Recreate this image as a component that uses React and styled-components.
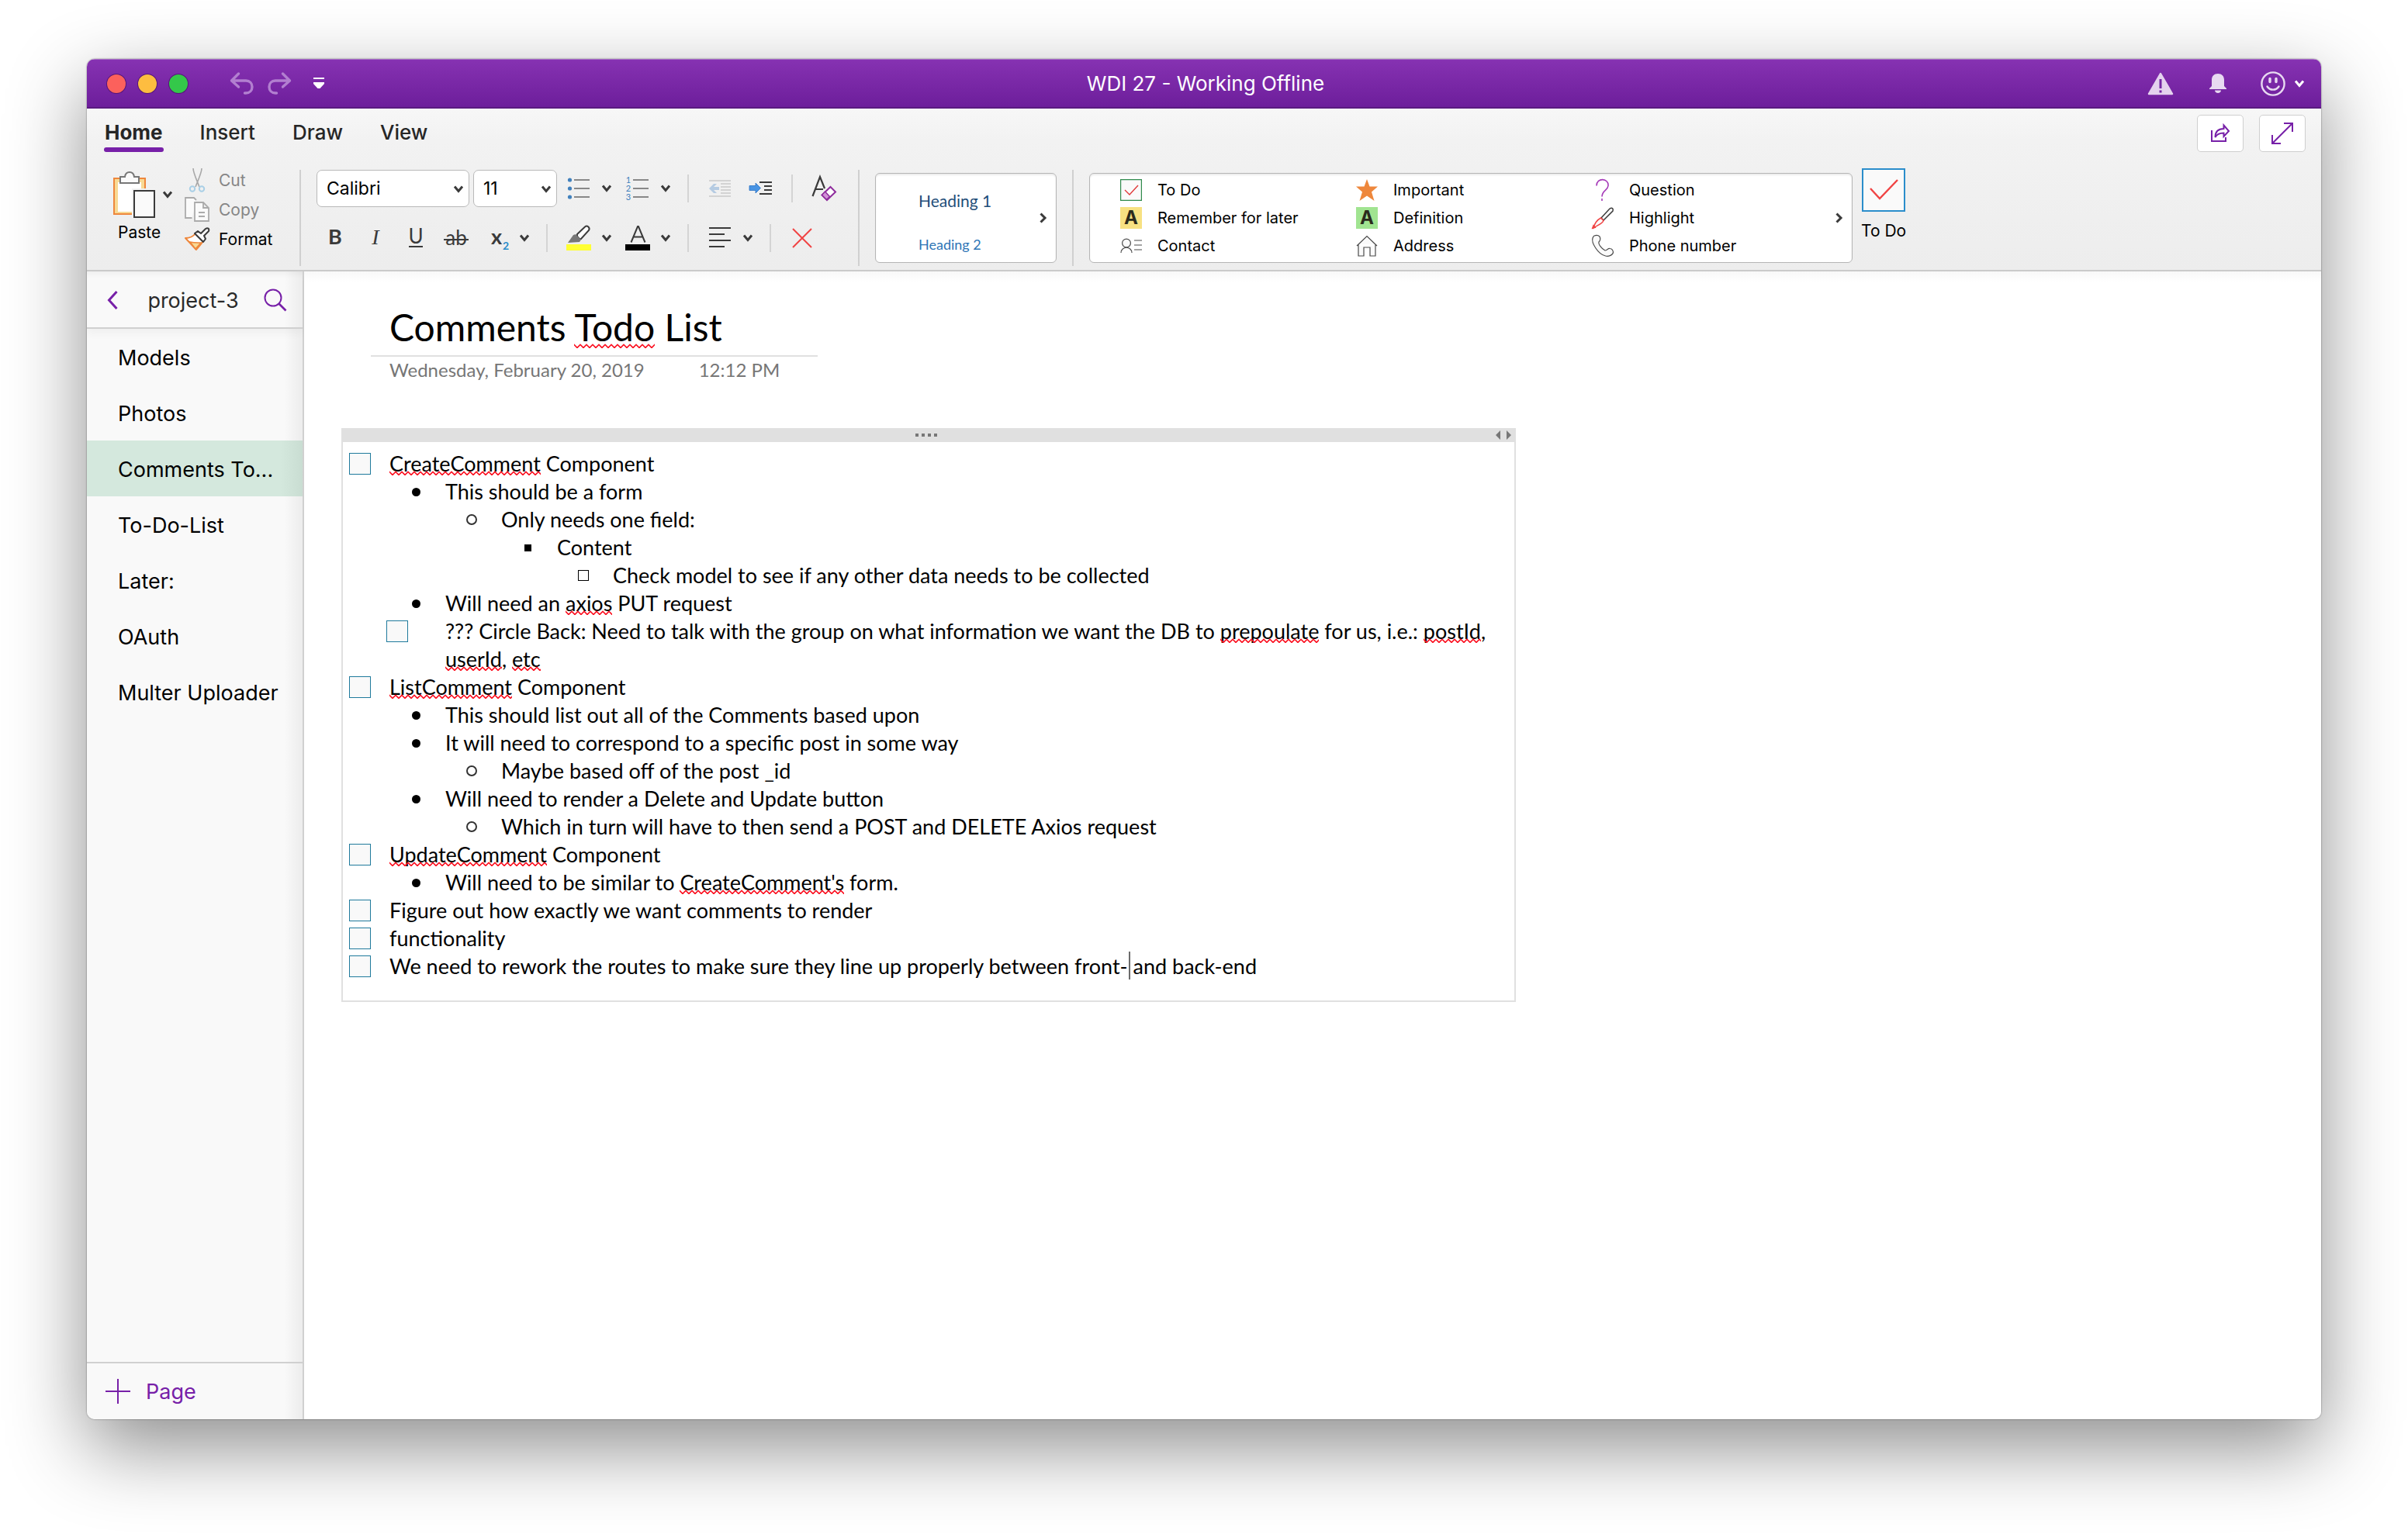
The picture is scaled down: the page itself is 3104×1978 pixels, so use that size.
import React from "react";
import styled, { createGlobalStyle, css } from "styled-components";

const ui = `Inter, "Liberation Sans", sans-serif`;
const note = `Lato, "Open Sans", sans-serif`;
const purple = "#7720a8";
const ink = "#3a3a3a";

const GlobalStyle = createGlobalStyle`
  *, *::before, *::after { box-sizing: border-box; }
  body { margin: 0; background: #fff; font-family: ${ui}; color: #000; }
  button, select, input { font: inherit; color: inherit; margin: 0; }
  button { padding: 0; border: 0; background: none; cursor: pointer; }
  svg { display: block; flex: none; overflow: visible; }
  ul { list-style: none; margin: 0; padding: 0; }
`;

/* ---------- window ---------- */

const Desktop = styled.div`
  display: flex;
  min-height: 100vh;
  padding: 76px 112px 148px;
`;

const Window = styled.div`
  flex: 1;
  min-width: 0;
  display: flex;
  flex-direction: column;
  border-radius: 10px;
  overflow: hidden;
  background: #fff;
  box-shadow: 0 0 2px rgba(0, 0, 0, 0.55), 0 36px 100px rgba(0, 0, 0, 0.45);
`;

const TitleBar = styled.header`
  display: grid;
  grid-template-columns: 1fr auto 1fr;
  align-items: center;
  height: 64px;
  padding: 0 22px 0 26px;
  background: linear-gradient(#8632b2, #6d1e9b);
  border-top: 1px solid #a873c6;
  border-bottom: 2px solid #5a1a80;
  color: #fff;
`;

const TitleSide = styled.div`
  display: flex;
  align-items: center;
  justify-content: ${(p) => (p.$end ? "flex-end" : "flex-start")};
`;

const Lights = styled.div`
  display: flex;
  gap: 16px;
  margin-right: 54px;
`;

const Light = styled.button`
  width: 24px;
  height: 24px;
  border-radius: 50%;
  background: ${(p) => p.$color};
  box-shadow: 0 0 0 1px rgba(60, 10, 90, 0.6);
`;

const BarButton = styled.button`
  display: flex;
  align-items: center;
  gap: 12px;
  margin-left: ${(p) => p.$gap || 0}px;
`;

const WindowTitle = styled.h1`
  margin: 0;
  font-size: 26px;
  line-height: 32px;
  font-weight: 400;
`;

/* ---------- ribbon ---------- */

const Ribbon = styled.section`
  background: linear-gradient(#f7f7f7, #f2f2f2 20%, #ededed);
  border-bottom: 2px solid #cacaca;
`;

const TabRow = styled.nav`
  display: flex;
  align-items: flex-start;
  gap: 46px;
  padding: 8px 20px 21px 22px;
`;

const Tab = styled.button`
  height: 48px;
  padding: 6px 1px 0;
  font-size: 26px;
  line-height: 34px;
  font-weight: ${(p) => (p.$active ? 700 : 500)};
  color: #262626;
  &::after {
    content: "";
    display: block;
    height: 6px;
    margin: 2px -1px 0;
    border-radius: 3px;
    background: ${(p) => (p.$active ? purple : "transparent")};
  }
`;

const TabActions = styled.div`
  display: flex;
  gap: 20px;
  margin-left: auto;
`;

const BoxButton = styled.button`
  display: grid;
  place-items: center;
  width: 60px;
  height: 48px;
  background: #fff;
  border: 1px solid #cfcfcf;
  border-radius: 5px;
`;

const Tools = styled.div`
  display: flex;
  align-items: flex-start;
  padding-bottom: 5px;
`;

const Rule = styled.span`
  flex: none;
  width: 2px;
  height: 124px;
  margin-top: 2px;
  background: #d0d0d0;
`;

const Clipboard = styled.div`
  display: flex;
  flex: none;
  width: 274px;
  padding-left: 34px;
  gap: 16px;
`;

const PasteButton = styled.button`
  width: 76px;
  text-align: left;
  font-size: 21px;
  line-height: 38px;
`;

const PasteIcons = styled.span`
  display: flex;
  align-items: center;
  gap: 10px;
`;

const PasteLabel = styled.span`
  display: block;
  padding-left: 6px;
`;

const ClipList = styled.div`
  display: flex;
  flex-direction: column;
  gap: 8px;
`;

const ClipButton = styled.button`
  display: flex;
  align-items: center;
  gap: 12px;
  height: 30px;
  font-size: 21px;
  color: ${(p) => (p.disabled ? "#868686" : "#000")};
`;

const FontTools = styled.div`
  flex: none;
  display: flex;
  flex-direction: column;
  gap: 22px;
  padding: 2px 28px 0 20px;
`;

const ToolRow = styled.div`
  display: flex;
  align-items: center;
  height: ${(p) => (p.$compact ? 36 : 48)}px;
  padding-left: ${(p) => (p.$compact ? 8 : 0)}px;
`;

const ToolSet = styled.div`
  display: flex;
  align-items: center;
  gap: ${(p) => p.$gap}px;
`;

const ToolRule = styled.span`
  width: 2px;
  height: 36px;
  margin: 0 24px 0 22px;
  background: #d4d4d4;
`;

const Tool = styled.button`
  display: flex;
  align-items: center;
  gap: 14px;
  color: ${ink};
`;

const Picker = styled.label`
  position: relative;
  display: block;
  margin-right: ${(p) => p.$after}px;
  svg {
    position: absolute;
    right: 8px;
    top: 20px;
    pointer-events: none;
  }
`;

const PickerSelect = styled.select`
  appearance: none;
  display: block;
  width: ${(p) => p.$width}px;
  height: 48px;
  padding: 0 30px 0 12px;
  font-size: 23px;
  color: #000;
  background: #fff;
  border: 1px solid #b9b9b9;
  border-radius: 7px;
`;

const Gallery = styled.div`
  display: flex;
  align-items: center;
  flex: 0 1 ${(p) => p.$width}px;
  height: 116px;
  margin: 6px ${(p) => p.$after}px 0 20px;
  padding: 0 12px 0 ${(p) => p.$inset}px;
  background: #fff;
  border: 1px solid #b5b5b5;
  border-radius: 6px;
  box-shadow: inset 0 2px 2px rgba(0, 0, 0, 0.08);
`;

const StyleList = styled.div`
  flex: 1;
  display: flex;
  flex-direction: column;
  align-items: flex-start;
  gap: 24px;
  padding-top: 12px;
`;

const StyleButton = styled.button`
  font-family: ${note};
  font-size: ${(p) => (p.$main ? 21 : 18)}px;
  line-height: 32px;
  color: ${(p) => (p.$main ? "#1f4e79" : "#2e75b6")};
`;

const TagGrid = styled.div`
  flex: 1;
  display: grid;
  grid-auto-flow: column;
  grid-template-rows: repeat(3, 28px);
  grid-template-columns: 304px 304px auto;
  row-gap: 8px;
  justify-content: start;
`;

const TagButton = styled.button`
  display: flex;
  align-items: center;
  gap: 20px;
  font-size: 20px;
  white-space: nowrap;
`;

const LetterTile = styled.span`
  width: 28px;
  height: 28px;
  background: ${(p) => p.$color};
  font-size: 24px;
  line-height: 28px;
  font-weight: 700;
  color: #2b2b1c;
`;

const TodoButton = styled.button`
  display: flex;
  flex-direction: column;
  align-items: center;
  font-size: 21px;
  line-height: 40px;
  white-space: nowrap;
`;

const TodoTile = styled.span`
  display: grid;
  place-items: center;
  width: 56px;
  height: 56px;
  margin-bottom: 5px;
  border: 2px solid #2a8dcb;
  background: #fafafa;
`;

/* ---------- body ---------- */

const Body = styled.div`
  flex: 1;
  display: flex;
`;

const Sidebar = styled.aside`
  flex: none;
  display: flex;
  flex-direction: column;
  width: 280px;
  border-right: 2px solid #d0d0d0;
  background:
    linear-gradient(90deg, transparent calc(100% - 24px), rgba(0, 0, 0, 0.05)),
    #f9f9f9;
`;

const SideHeader = styled.div`
  display: flex;
  align-items: center;
  justify-content: space-between;
  height: 74px;
  padding: 2px 20px 0 26px;
  border-bottom: 2px solid #d0d0d0;
  box-shadow: inset 0 10px 10px -8px rgba(0, 0, 0, 0.06), 0 6px 10px rgba(0, 0, 0, 0.04);
`;

const SectionName = styled.h2`
  margin: 0;
  padding-left: 6px;
  font-size: 27px;
  font-weight: 400;
  color: #2a2a2a;
`;

const PageLink = styled.a`
  display: block;
  padding: 4px 0 0 40px;
  font-size: 27px;
  line-height: 68px;
  white-space: nowrap;
  text-decoration: none;
  color: #000;
  ${(p) => p.$active && css`
    background: linear-gradient(90deg, #d4e8dd 90%, #c9ddd2);
  `}
`;

const AddPage = styled.button`
  display: flex;
  align-items: center;
  gap: 20px;
  height: 74px;
  margin-top: auto;
  padding-left: 24px;
  border-top: 2px solid #d0d0d0;
  font-size: 27px;
  color: ${purple};
`;

const Canvas = styled.main`
  flex: 1;
  min-width: 0;
  padding: 40px 48px;
  font-family: ${note};
  background: linear-gradient(#f8f8f8, #fff 14px);
`;

const TitleBlock = styled.div`
  width: 576px;
  margin-left: 38px;
  padding: 0 0 4px 24px;
  border-bottom: 2px solid #e0e0e0;
`;

const NoteTitle = styled.h2`
  margin: 0;
  font-size: 48px;
  line-height: 64px;
  font-weight: 400;
`;

const Stamp = styled.div`
  display: flex;
  gap: 70px;
  margin: 0 0 58px 62px;
  font-size: 24px;
  line-height: 34px;
  color: #767676;
`;

const NoteBox = styled.article`
  width: 1514px;
  max-width: 100%;
  border: 2px solid #e0e0e0;
  border-top: 0;
`;

const Grip = styled.div`
  display: grid;
  grid-template-columns: 1fr auto 1fr;
  align-items: center;
  height: 18px;
  margin: 0 -2px;
  padding-right: 6px;
  background: #e0e0e0;
  svg:last-child { justify-self: end; grid-column: 3; }
  svg:first-child { grid-column: 2; }
`;

const Lines = styled.ul`
  padding: 10px 8px 26px;
`;

const Line = styled.li`
  display: flex;
  align-items: flex-start;
  gap: ${(p) => (p.$nested ? 48 : 24)}px;
  padding-left: ${(p) => p.$level * 72 - (p.$nested ? 24 : 0)}px;
  font-size: 27px;
  line-height: 36px;
`;

const Marker = styled.span`
  flex: none;
  display: grid;
  place-items: center;
  width: 28px;
  height: 36px;
`;

const Check = styled.input`
  appearance: none;
  width: 28px;
  height: 28px;
  border: 1px solid #1f7a9c;
  background: #f9f9f9;
`;

const bulletShapes = {
  1: css`width: 11px; height: 11px; border-radius: 50%; background: #000;`,
  2: css`width: 14px; height: 14px; border-radius: 50%; border: 2px solid #333;`,
  3: css`width: 9px; height: 9px; background: #000;`,
  4: css`width: 14px; height: 14px; border: 1px solid #000;`,
};

const Bullet = styled.span`
  ${(p) => bulletShapes[p.$level]}
`;

const Misspelled = styled.span`
  position: relative;
  &::after {
    content: "";
    position: absolute;
    left: 0;
    right: 0;
    bottom: 1px;
    height: 6px;
    background: url("data:image/svg+xml,%3Csvg xmlns='http://www.w3.org/2000/svg' width='8' height='6'%3E%3Cpath d='M-2 -1L4 5L10 -1' transform='translate(0 .4)' fill='none' stroke='%23fb1020' stroke-width='1.7'/%3E%3C/svg%3E") repeat-x;
  }
`;

const Caret = styled.span`
  position: relative;
  &::after {
    content: "";
    position: absolute;
    left: 1px;
    top: -2px;
    width: 2px;
    height: 36px;
    background: #6b6b6b;
  }
`;

/* ---------- icons ---------- */

const Chevron = ({ color = ink }) => (
  <svg width="12" height="10" viewBox="0 0 12 10" fill="none" stroke={color} strokeWidth="3">
    <path d="M1 1.5 6 7.5 11 1.5" />
  </svg>
);

const ChevronRight = () => (
  <svg width="9" height="14" viewBox="0 0 9 14" fill="none" stroke={ink} strokeWidth="3">
    <path d="M1.5 1.5 7 7 1.5 12.5" />
  </svg>
);

const Undo = ({ flip }) => (
  <svg width="32" height="30" viewBox="0 0 32 30" fill="none" stroke="#b27fd0" strokeWidth="3.400" strokeLinecap="round" strokeLinejoin="round">
    <g transform={flip ? "matrix(-1 0 0 1 32 0)" : undefined}>
      <path d="M11.500 2 2.500 11l9 8M3 11h18c5 0 8 3.500 8 8s-3 8-8 8h-1.500" />
    </g>
  </svg>
);

const CustomizeBar = () => (
  <svg width="14" height="15" viewBox="0 0 14 15" fill="#fff">
    <path d="M0 0h14v2H0zM0 6h14v2l-5.500 6h-3L0 8z" />
  </svg>
);

const Warning = () => (
  <svg width="34" height="30" viewBox="0 0 34 30">
    <path d="M17 2 32 28H2z" fill="#e4d2ee" stroke="#e4d2ee" strokeWidth="2.500" strokeLinejoin="round" />
    <path d="M17 9v12M17 23.500v3" stroke="#7426a4" strokeWidth="3" />
  </svg>
);

const Bell = () => (
  <svg width="22" height="26" viewBox="0 0 22 26" fill="#e8daf1">
    <path d="M11 0c5 0 8 3 8 8v8l3 3v1H0v-1l3-3V8c0-5 3-8 8-8zM7 21.500h8c0 2-2 3.500-4 3.500s-4-1.500-4-3.500z" />
  </svg>
);

const Smile = () => (
  <svg width="32" height="32" viewBox="0 0 32 32" fill="none" stroke="#e8daf1" strokeWidth="2.400" strokeLinecap="round">
    <circle cx="16" cy="16" r="14.600" />
    <path d="M12 9.500v4M20 9.500v4" strokeWidth="3.400" />
    <path d="M8.500 19.500c3.500 5.500 11.500 5.500 15 0" />
  </svg>
);

const Share = () => (
  <svg width="26" height="26" viewBox="0 0 26 26" fill="none" stroke={purple} strokeWidth="2">
    <path d="M2 9v14h18v-5" />
    <path d="M6.500 18c0-7 4-11 11-11V2.500L24 10l-6.500 7v-4.500c-5 0-9 1.500-11 5.500z" />
  </svg>
);

const Expand = () => (
  <svg width="28" height="28" viewBox="0 0 28 28" fill="none" stroke={purple} strokeWidth="2">
    <path d="M1 27 27 1M16 1h11v11M1 16v11h11" />
  </svg>
);

const PasteIcon = () => (
  <svg width="54" height="60" viewBox="0 0 54 60">
    <path d="M1 9h40v19H26v27H1z" fill="#f8d994" />
    <path d="M6 14h30v14H26v24H6z" fill="#fff" />
    <path d="M41 22V9H1v46h23" fill="none" stroke="#ee873c" strokeWidth="2" />
    <path d="M9 15V7h6c1-8 11-8 12 0h6v8z" fill="#fafafa" stroke="#777" strokeWidth="2" />
    <path d="M24 22h30v38H24z" fill="#f2f2f2" />
    <path d="M27 25h26v34H27z" fill="#fafafa" stroke={ink} strokeWidth="2" />
  </svg>
);

const CutIcon = () => (
  <svg width="32" height="32" viewBox="0 0 32 32" fill="none">
    <path d="M11 1c0 5 2 9 8 24M22 1c0 5-2 9-8 24" stroke="#a8a8a8" strokeWidth="1.600" />
    <circle cx="10" cy="27.500" r="3.200" stroke="#a9cfe6" strokeWidth="2" />
    <circle cx="22" cy="27.500" r="3.200" stroke="#a9cfe6" strokeWidth="2" />
  </svg>
);

const CopyIcon = () => (
  <svg width="32" height="32" viewBox="0 0 32 32" fill="#fafafa" stroke="#ababab" strokeWidth="1.800">
    <path d="M9.500 27H1V1h11l3 3" />
    <path d="M13 7h11l7 7v17H13zM24 7v7h7M18 20h8M18 25h8" />
  </svg>
);

const FormatIcon = () => (
  <svg width="32" height="30" viewBox="0 0 32 30">
    <path d="M1 14c5 0 10-2 13-6l10 10c-3 4-6 7-9 11z" fill="#fff" stroke="#ee873c" strokeWidth="2" strokeLinejoin="round" />
    <path d="M7 19c5 1 10 1 14 1l-7 8z" fill="#f8d994" stroke="#ee873c" strokeWidth="1.500" />
    <path d="m13 8 4-3 4 3 6-6c3-2 5 0 4 3l-6 6 2 4-3 4z" fill="#fafafa" stroke={ink} strokeWidth="2" strokeLinejoin="round" />
  </svg>
);

const GlyphText = styled.text`
  font-family: ${(p) => p.$family || note};
  font-size: ${(p) => p.$size}px;
  font-weight: ${(p) => p.$weight || 400};
  font-style: ${(p) => (p.$italic ? "italic" : "normal")};
  text-anchor: middle;
`;

const Glyph = ({ children }) => (
  <svg width="32" height="36" viewBox="0 0 32 36" fill={ink}>{children}</svg>
);

const BulletList = () => (
  <svg width="32" height="32" viewBox="0 0 32 32">
    {[5, 16, 27].map((y) => (
      <g key={y}>
        <circle cx="4.500" cy={y} r="2.600" fill="#4181bd" />
        <path d={`M10 ${y}h20`} stroke="#666" strokeWidth="1.400" />
      </g>
    ))}
  </svg>
);

const NumberList = () => (
  <svg width="32" height="32" viewBox="0 0 32 32">
    {[5, 16, 27].map((y, i) => (
      <g key={y}>
        <GlyphText x="4" y={y + 4} $size="11" fill="#4181bd">{i + 1}</GlyphText>
        <path d={`M10 ${y}h20`} stroke="#666" strokeWidth="1.400" />
      </g>
    ))}
  </svg>
);

const Outdent = () => (
  <svg width="32" height="32" viewBox="0 0 32 32">
    <path d="M2 6h28M17 10h13M17 14h13M17 18h13M17 22h13M2 26h28" stroke="#c9c9c9" strokeWidth="1.400" />
    <path d="M2 16 8 10h4l-4 4h7v4H8l4 4H8z" fill="#b5cbe2" />
  </svg>
);

const Indent = () => (
  <svg width="32" height="32" viewBox="0 0 32 32">
    <path d="M13 8h16M19 13h10M19 18h10M13 23h16" stroke={ink} strokeWidth="1.900" />
    <path d="M0 12.500h8V9l6.500 6.500L8 22v-3.500H0z" fill="#4894e4" stroke="#2b72c4" strokeWidth=".8" />
  </svg>
);

const ClearFormat = () => (
  <svg width="32" height="34" viewBox="0 0 32 34" fill="none">
    <path d="M1.500 27 11 2l6 15M5 18h10" stroke={ink} strokeWidth="2.200" />
    <path d="M24.500 15 31 21.500 20 32l-6.500-6.500z" fill="#fff" stroke="#8e2c9c" strokeWidth="2" />
    <path d="m17.500 21 6 6.500-4 4L13.500 25.500z" fill="#d191d6" stroke="#8e2c9c" strokeWidth="1.500" />
  </svg>
);

const Highlighter = () => (
  <svg width="32" height="36" viewBox="0 0 32 36">
    <path d="M14 13 24 3.500c3-2.500 7 1 5 4.500L19 19c-2 1-6-3-5-6z" fill="#fff" stroke={ink} strokeWidth="2" />
    <path d="M2 24 9 14l3-1 7 7-2 3z" fill="#777" />
    <path d="M0 26h32v8H0z" fill="#ffff33" />
  </svg>
);

const FontColor = () => (
  <svg width="32" height="36" viewBox="0 0 32 36">
    <path d="M7.500 23.500 16 3h1l8.500 20.500M11 16.500h11" fill="none" stroke={ink} strokeWidth="2" />
    <path d="M0 26h32v8H0z" fill="#000" />
  </svg>
);

const AlignLeft = () => (
  <svg width="32" height="36" viewBox="0 0 32 36" stroke={ink} strokeWidth="2">
    <path d="M2 5h28M2 13h20M2 21h28M2 29h20" />
  </svg>
);

const RemoveX = () => (
  <svg width="32" height="32" viewBox="0 0 32 32" stroke="#f04444" strokeWidth="2">
    <path d="M4 4 28 28M28 4 4 28" />
  </svg>
);

const TagIcon = ({ children }) => (
  <svg width="28" height="28" viewBox="0 0 28 28" fill="none" stroke="#4a4a4a" strokeWidth="1.200">{children}</svg>
);

const tagIcons = {
  todo: <TagIcon><path d="M.6.6h26.800v26.800H.6z" fill="#fafafa" stroke="#2f8a4c" /><path d="m6 14 6 6L23 8" stroke="#e03a3a" strokeWidth="1.400" /></TagIcon>,
  remember: <LetterTile $color="#f7e182">A</LetterTile>,
  contact: <TagIcon><circle cx="8" cy="10.500" r="5.400" fill="#fafafa" /><path d="M1 23c0-9 14-9 14 0M18 7h10M18 13h10M18 19h10" /></TagIcon>,
  important: <TagIcon><path d="m14 0 3.500 9.500H28l-8 7L23.500 28 14 21.500 4.500 28 8 16.500 0 9.500h10.500z" fill="#ee873c" stroke="none" /></TagIcon>,
  definition: <LetterTile $color="#a1e491">A</LetterTile>,
  address: <TagIcon><path d="M1 14 14 1.500 27 14M3 12v15h7V16h8v11h7V12" fill="#fafafa" /></TagIcon>,
  question: <TagIcon><path d="M6 8.500c0-11 16-10 15 0-.5 6-8 6-8 14M13 25v3" stroke="#a53ab8" strokeWidth="1.600" /></TagIcon>,
  highlight: <TagIcon><path d="M12 14 23 2c3-2 5 0 4 3L15 17z" fill="#fafafa" stroke={ink} strokeWidth="1.500" /><path d="M11.500 14 15 17.500C13 22 6 24 2 27c1-4 4-10 9.500-13z" fill="#fafafa" stroke="#f04444" strokeWidth="1.500" /><path d="M.5 27.500 2 23.500l2.500 3z" fill="#f04444" stroke="#f04444" /></TagIcon>,
  phone: <TagIcon><path d="M3 1c3-1 5-1 7 1 1 2 1 5-1 7-1 3 4 9 8 11 2 0 4-3 6-2.500 2 0 4 2 4.500 4.500 0 4-6 6-10 5C8 25-1 10 1 4c.5-1.500 1-2.500 2-3z" fill="#fafafa" /></TagIcon>,
};

const SearchIcon = () => (
  <svg width="30" height="30" viewBox="0 0 30 30" fill="none" stroke={purple} strokeWidth="2">
    <circle cx="12" cy="12" r="10.500" />
    <path d="M19.500 19.500 28.500 28.500" strokeWidth="2.600" />
  </svg>
);

const BackIcon = () => (
  <svg width="14" height="26" viewBox="0 0 14 26" fill="none" stroke={purple} strokeWidth="3">
    <path d="M12.500 2 2.500 13 12.500 24" />
  </svg>
);

const PlusIcon = () => (
  <svg width="32" height="32" viewBox="0 0 32 32" stroke={purple} strokeWidth="2">
    <path d="M16 0v32M0 16h32" />
  </svg>
);

/* ---------- content ---------- */

const tabs = ["Home", "Insert", "Draw", "View"];

const tags = [
  ["todo", "To Do"],
  ["remember", "Remember for later"],
  ["contact", "Contact"],
  ["important", "Important"],
  ["definition", "Definition"],
  ["address", "Address"],
  ["question", "Question"],
  ["highlight", "Highlight"],
  ["phone", "Phone number"],
];

const pages = ["Models", "Photos", "Comments To...", "To-Do-List", "Later:", "OAuth", "Multer Uploader"];

const M = Misspelled;

const lines = [
  { level: 0, todo: true, text: <><M>CreateComment</M> Component</> },
  { level: 1, text: "This should be a form" },
  { level: 2, text: "Only needs one field:" },
  { level: 3, text: "Content" },
  { level: 4, text: "Check model to see if any other data needs to be collected" },
  { level: 1, text: <>Will need an <M>axios</M> PUT request</> },
  { level: 1, todo: true, text: <>??? Circle Back: Need to talk with the group on what information we want the DB to <M>prepoulate</M> for us, i.e.: <M>postId</M>, <M>userId</M>, <M>etc</M></> },
  { level: 0, todo: true, text: <><M>ListComment</M> Component</> },
  { level: 1, text: "This should list out all of the Comments based upon" },
  { level: 1, text: "It will need to correspond to a specific post in some way" },
  { level: 2, text: "Maybe based off of the post _id" },
  { level: 1, text: "Will need to render a Delete and Update button" },
  { level: 2, text: "Which in turn will have to then send a POST and DELETE Axios request" },
  { level: 0, todo: true, text: <><M>UpdateComment</M> Component</> },
  { level: 1, text: <>Will need to be similar to <M>CreateComment's</M> form.</> },
  { level: 0, todo: true, text: "Figure out how exactly we want comments to render" },
  { level: 0, todo: true, text: "functionality" },
  { level: 0, todo: true, text: <>We need to rework the routes to make sure they line up properly between front-<Caret /> and back-end</> },
];

const NoteLine = ({ line, id }) => (
  <Line $level={line.level} $nested={line.todo && line.level > 0}>
    <Marker>
      {line.todo ? <Check type="checkbox" id={id} /> : <Bullet $level={line.level} />}
    </Marker>
    {line.todo ? <label htmlFor={id}>{line.text}</label> : <span>{line.text}</span>}
  </Line>
);

export default function App() {
  return (
    <>
      <GlobalStyle />
      <Desktop>
        <Window>
          <TitleBar>
            <TitleSide>
              <Lights>
                <Light $color="#fc615c" aria-label="Close" />
                <Light $color="#fdbd40" aria-label="Minimize" />
                <Light $color="#34c84a" aria-label="Zoom" />
              </Lights>
              <BarButton aria-label="Undo"><Undo /></BarButton>
              <BarButton $gap={16} aria-label="Redo"><Undo flip /></BarButton>
              <BarButton $gap={28} aria-label="Customize toolbar"><CustomizeBar /></BarButton>
            </TitleSide>
            <WindowTitle>WDI 27 - Working Offline</WindowTitle>
            <TitleSide $end>
              <BarButton aria-label="Warnings"><Warning /></BarButton>
              <BarButton $gap={46} aria-label="Notifications"><Bell /></BarButton>
              <BarButton $gap={44} aria-label="Feedback"><Smile /><Chevron color="#fff" /></BarButton>
            </TitleSide>
          </TitleBar>

          <Ribbon>
            <TabRow>
              {tabs.map((t, i) => <Tab key={t} $active={i === 0}>{t}</Tab>)}
              <TabActions>
                <BoxButton aria-label="Share"><Share /></BoxButton>
                <BoxButton aria-label="Full page view"><Expand /></BoxButton>
              </TabActions>
            </TabRow>
            <Tools>
              <Clipboard>
                <PasteButton>
                  <PasteIcons><PasteIcon /><Chevron /></PasteIcons>
                  <PasteLabel>Paste</PasteLabel>
                </PasteButton>
                <ClipList>
                  <ClipButton disabled><CutIcon />Cut</ClipButton>
                  <ClipButton disabled><CopyIcon />Copy</ClipButton>
                  <ClipButton><FormatIcon />Format</ClipButton>
                </ClipList>
              </Clipboard>
              <Rule />
              <FontTools>
                <ToolRow>
                  <Picker $after={5}>
                    <PickerSelect $width={197} aria-label="Font"><option>Calibri</option></PickerSelect>
                    <Chevron />
                  </Picker>
                  <Picker $after={12}>
                    <PickerSelect $width={108} aria-label="Font size"><option>11</option></PickerSelect>
                    <Chevron />
                  </Picker>
                  <ToolSet $gap={18}>
                    <Tool aria-label="Bullets"><BulletList /><Chevron /></Tool>
                    <Tool aria-label="Numbering"><NumberList /><Chevron /></Tool>
                  </ToolSet>
                  <ToolRule />
                  <ToolSet $gap={22}>
                    <Tool aria-label="Decrease indent"><Outdent /></Tool>
                    <Tool aria-label="Increase indent"><Indent /></Tool>
                  </ToolSet>
                  <ToolRule />
                  <Tool aria-label="Clear formatting"><ClearFormat /></Tool>
                </ToolRow>
                <ToolRow $compact>
                  <ToolSet $gap={20}>
                    <Tool aria-label="Bold"><Glyph><GlyphText x="16" y="26" $size="27" $weight="700">B</GlyphText></Glyph></Tool>
                    <Tool aria-label="Italic"><Glyph><GlyphText x="16" y="26" $size="28" $italic $family={`"Liberation Serif", serif`}>I</GlyphText></Glyph></Tool>
                    <Tool aria-label="Underline"><Glyph><GlyphText x="16" y="25" $size="26">U</GlyphText><path d="M7 28h18v2H7z" /></Glyph></Tool>
                    <Tool aria-label="Strikethrough"><Glyph><GlyphText x="16" y="27" $size="26">ab</GlyphText><path d="M0 19h32v2H0z" /></Glyph></Tool>
                    <Tool aria-label="Subscript">
                      <Glyph><GlyphText x="16" y="26" $size="27" $weight="700">x</GlyphText><GlyphText x="28" y="33" $size="14" $weight="700" fill="#2a8dcb">2</GlyphText></Glyph>
                      <Chevron />
                    </Tool>
                  </ToolSet>
                  <ToolRule />
                  <ToolSet $gap={18}>
                    <Tool aria-label="Highlight color"><Highlighter /><Chevron /></Tool>
                    <Tool aria-label="Font color"><FontColor /><Chevron /></Tool>
                  </ToolSet>
                  <ToolRule />
                  <Tool aria-label="Alignment"><AlignLeft /><Chevron /></Tool>
                  <ToolRule />
                  <Tool aria-label="Delete"><RemoveX /></Tool>
                </ToolRow>
              </FontTools>
              <Rule />
              <Gallery $width={234} $after={20} $inset={55}>
                <StyleList>
                  <StyleButton $main>Heading 1</StyleButton>
                  <StyleButton>Heading 2</StyleButton>
                </StyleList>
                <ChevronRight />
              </Gallery>
              <Rule />
              <Gallery $width={984} $after={11} $inset={39}>
                <TagGrid>
                  {tags.map(([icon, label]) => <TagButton key={label}>{tagIcons[icon]}{label}</TagButton>)}
                </TagGrid>
                <ChevronRight />
              </Gallery>
              <TodoButton>
                <TodoTile>
                  <svg width="40" height="40" viewBox="0 0 40 40" fill="none" stroke="#f04444" strokeWidth="2.400">
                    <path d="M3 18 15 31 38 7" />
                  </svg>
                </TodoTile>
                To Do
              </TodoButton>
            </Tools>
          </Ribbon>

          <Body>
            <Sidebar>
              <SideHeader>
                <button aria-label="Back"><BackIcon /></button>
                <SectionName>project-3</SectionName>
                <button aria-label="Search"><SearchIcon /></button>
              </SideHeader>
              <nav>
                {pages.map((p, i) => <PageLink key={p} href="#" $active={i === 2}>{p}</PageLink>)}
              </nav>
              <AddPage><PlusIcon />Page</AddPage>
            </Sidebar>

            <Canvas>
              <TitleBlock>
                <NoteTitle>Comments <Misspelled>Todo</Misspelled> List</NoteTitle>
              </TitleBlock>
              <Stamp>
                <span>Wednesday, February 20, 2019</span>
                <span>12:12 PM</span>
              </Stamp>
              <NoteBox>
                <Grip>
                  <svg width="28" height="4" viewBox="0 0 28 4" fill="#777"><path d="M0 0h4v4H0zM8 0h4v4H8zM16 0h4v4h-4zM24 0h4v4h-4z" /></svg>
                  <svg width="20" height="12" viewBox="0 0 20 12" fill="#777"><path d="M6 0v12L0 6zM14 0v12l6-6z" /></svg>
                </Grip>
                <Lines>
                  {lines.map((line, i) => <NoteLine key={i} line={line} id={`line-${i}`} />)}
                </Lines>
              </NoteBox>
            </Canvas>
          </Body>
        </Window>
      </Desktop>
    </>
  );
}
